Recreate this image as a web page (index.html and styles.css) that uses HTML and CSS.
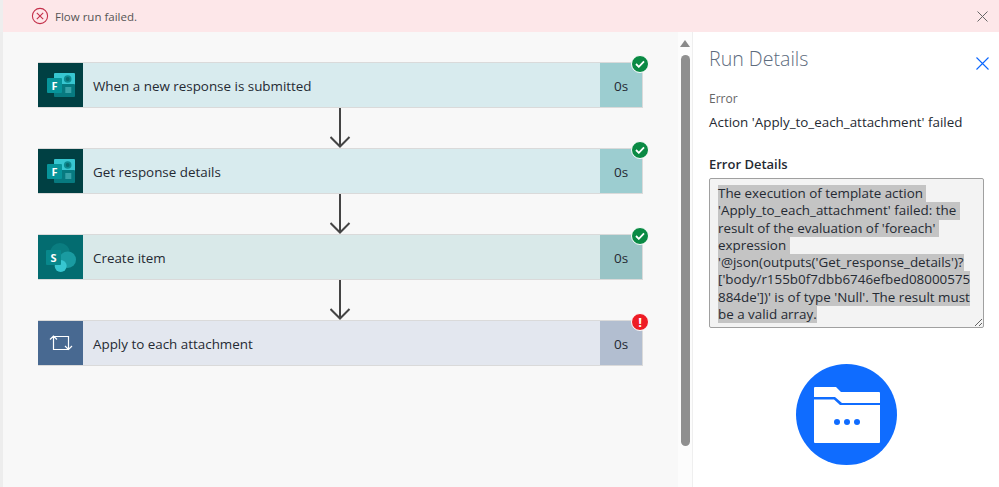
FILE: index.html
```html
<!DOCTYPE html>
<html lang="en">
<head>
    <meta charset="UTF-8">
    <title>Flow run failed</title>
    <link rel="stylesheet" href="styles.css">
</head>
<body>
    <!-- Top banner -->
    <div class="banner">
        <svg class="banner-icon" width="18" height="18" viewBox="0 0 18 18">
            <circle cx="9" cy="9" r="7.600" fill="none" stroke="#c4314b" stroke-width="1.100"/>
            <path d="M5.800 5.800l6.400 6.400M12.200 5.800l-6.400 6.400" stroke="#c4314b" stroke-width="1.100"/>
        </svg>
        <span class="banner-text">Flow run failed.</span>
        <svg class="banner-close" width="11" height="11" viewBox="0 0 11 11">
            <path d="M0.500 0.500l10 10M10.500 0.500l-10 10" stroke="#666" stroke-width="1"/>
        </svg>
    </div>

    <div class="main">
        <!-- Flow canvas -->
        <div class="canvas">
            <div class="step teal">
                <div class="step-icon forms">
                    <svg width="28" height="24" viewBox="0 0 28 24">
                        <rect x="7" y="0" width="21" height="14" rx="1" fill="#37c6d0"/>
                        <rect x="7" y="11" width="21" height="13" rx="1" fill="#077a80"/>
                        <circle cx="20.700" cy="6" r="3.800" fill="#0d8b91"/>
                        <circle cx="20.700" cy="6" r="2" fill="#086a6f"/>
                        <rect x="18.300" y="14" width="6" height="6" fill="#37a3a8"/>
                        <rect x="0" y="5" width="15" height="15" rx="1" fill="#07949a"/>
                        <text x="7.500" y="17" class="tile-letter">F</text>
                    </svg>
                </div>
                <div class="step-name">When a new response is submitted</div>
                <div class="step-time">0s</div>
                <span class="badge ok"><svg width="10" height="8" viewBox="0 0 10 8"><path d="M1 4l2.800 2.800L9 1.300" fill="none" stroke="#fff" stroke-width="1.800"/></svg></span>
            </div>
            <div class="arrow"><svg width="22" height="40" viewBox="0 0 22 40"><path d="M10 0v38.500M0.500 29l9.500 9.500 9.500-9.500" fill="none" stroke="#444" stroke-width="2"/></svg></div>
            <div class="step teal">
                <div class="step-icon forms">
                    <svg width="28" height="24" viewBox="0 0 28 24">
                        <rect x="7" y="0" width="21" height="14" rx="1" fill="#37c6d0"/>
                        <rect x="7" y="11" width="21" height="13" rx="1" fill="#077a80"/>
                        <circle cx="20.700" cy="6" r="3.800" fill="#0d8b91"/>
                        <circle cx="20.700" cy="6" r="2" fill="#086a6f"/>
                        <rect x="18.300" y="14" width="6" height="6" fill="#37a3a8"/>
                        <rect x="0" y="5" width="15" height="15" rx="1" fill="#07949a"/>
                        <text x="7.500" y="17" class="tile-letter">F</text>
                    </svg>
                </div>
                <div class="step-name">Get response details</div>
                <div class="step-time">0s</div>
                <span class="badge ok"><svg width="10" height="8" viewBox="0 0 10 8"><path d="M1 4l2.800 2.800L9 1.300" fill="none" stroke="#fff" stroke-width="1.800"/></svg></span>
            </div>
            <div class="arrow"><svg width="22" height="40" viewBox="0 0 22 40"><path d="M10 0v38.500M0.500 29l9.500 9.500 9.500-9.500" fill="none" stroke="#444" stroke-width="2"/></svg></div>
            <div class="step sea">
                <div class="step-icon sharepoint">
                    <svg width="30" height="30" viewBox="0 0 30 30">
                        <circle cx="14" cy="11" r="10" fill="#0a7d80"/>
                        <circle cx="21.700" cy="17.700" r="8.300" fill="#1a9ba1"/>
                        <circle cx="14.700" cy="24" r="6" fill="#37c6d0"/>
                        <rect x="0" y="8" width="15" height="15" rx="1" fill="#08888c"/>
                        <text x="7.500" y="20" class="tile-letter">S</text>
                    </svg>
                </div>
                <div class="step-name">Create item</div>
                <div class="step-time">0s</div>
                <span class="badge ok"><svg width="10" height="8" viewBox="0 0 10 8"><path d="M1 4l2.800 2.800L9 1.300" fill="none" stroke="#fff" stroke-width="1.800"/></svg></span>
            </div>
            <div class="arrow"><svg width="22" height="40" viewBox="0 0 22 40"><path d="M10 0v38.500M0.500 29l9.500 9.500 9.500-9.500" fill="none" stroke="#444" stroke-width="2"/></svg></div>
            <div class="step slate">
                <div class="step-icon loop">
                    <svg width="24" height="16" viewBox="0 0 24 16">
                        <path d="M1 4.500L4.500 1 8 4.500M4.500 1v13.500H19.500M4.500 1.500H19.500V14.500M16 11l3.500 3.500L23 11" fill="none" stroke="#fff" stroke-width="1.200"/>
                    </svg>
                </div>
                <div class="step-name">Apply to each attachment</div>
                <div class="step-time">0s</div>
                <span class="badge fail">!</span>
            </div>
        </div>

        <!-- Scrollbar of the canvas -->
        <div class="scrollbar">
            <div class="scroll-up"></div>
            <div class="scroll-thumb"></div>
        </div>

        <!-- Run details panel -->
        <div class="panel">
            <div class="panel-head">
                <h2>Run Details</h2>
                <svg class="panel-close" width="13" height="13" viewBox="0 0 13 13"><path d="M0.500 0.500l12 12M12.500 0.500l-12 12" fill="none" stroke="#0a66ff" stroke-width="1.100"/></svg>
            </div>
            <div class="panel-label">Error</div>
            <div class="panel-value">Action 'Apply_to_each_attachment' failed</div>
            <div class="panel-title">Error Details</div>
            <div class="error-box">
                <span class="sel">The execution of template action&nbsp;</span>
                <span class="sel">'Apply_to_each_attachment' failed: the&nbsp;</span>
                <span class="sel">result of the evaluation of 'foreach'&nbsp;</span>
                <span class="sel">expression&nbsp;</span>
                <span class="sel">'@json(outputs('Get_response_details')?</span>
                <span class="sel">['body/r155b0f7dbb6746efbed08000575</span>
                <span class="sel">884de'])' is of type 'Null'. The result must</span>
                <span class="sel">be a valid array.</span>
            </div>
            <div class="folder">
                <svg width="66" height="56" viewBox="0 0 66 56">
                    <path d="M1 0H22L27 5H65A1 1 0 0 1 66 6V16H28L21 10H0V1A1 1 0 0 1 1 0z" fill="#fff"/>
                    <path d="M0 12.500H20L26 18H66V55A1 1 0 0 1 65 56H1A1 1 0 0 1 0 55z" fill="#fff"/>
                    <circle cx="23" cy="35" r="3" fill="#0f6cff"/>
                    <circle cx="33" cy="35" r="3" fill="#0f6cff"/>
                    <circle cx="43" cy="35" r="3" fill="#0f6cff"/>
                </svg>
            </div>
        </div>
    </div>
</body>
</html>
```

FILE: styles.css
```css
body, html {
    margin: 0;
    padding: 0;
    height: 100%;
    overflow: hidden;
    font-family: "Open Sans", "Noto Sans", sans-serif;
    font-size: 14px;
    color: #252a33;
    background: #fff;
}
/* Banner */
.banner {
    height: 32px;
    padding: 0 11px 0 28px;
    display: flex;
    align-items: center;
    border-left: 3px solid #eee;
    background-color: #fde7e9;
}
.banner-text {
    margin-left: 6px;
    font-size: 11.500px;
    color: #555;
    flex: 1;
}
/* Main row */
.main {
    display: flex;
    height: 455px;
    border-left: 3px solid #ededed;
}
.canvas {
    width: 675px;
    padding: 30px 0 0 35px;
    box-sizing: border-box;
    background-color: #f8f8f8;
}
.step {
    position: relative;
    display: flex;
    width: 605px;
    height: 46px;
    box-sizing: border-box;
    border: 1px solid #dadada;
    border-left: none;
}
.step-icon {
    width: 45px;
    display: flex;
    align-items: center;
    justify-content: center;
}
.step-name {
    flex: 1;
    display: flex;
    align-items: center;
    padding: 1px 0 0 10px;
    font-size: 13.400px;
}
.step-time {
    width: 42px;
    display: flex;
    align-items: center;
    justify-content: center;
    padding-top: 1px;
    font-size: 13.500px;
}
.tile-letter {
    font-family: "Open Sans", sans-serif;
    font-size: 11px;
    font-weight: 700;
    fill: #fff;
    text-anchor: middle;
}
.teal { background-color: #d8ebee; }
.teal .step-time { background-color: #9ccdd0; }
.forms { background-color: #004043; }
.sea { background-color: #d9e9e9; }
.sea .step-time { background-color: #99c4c6; }
.sharepoint { background-color: #036c70; }
.slate { background-color: #e3e7ef; }
.slate .step-time { background-color: #b2bed0; }
.loop { background-color: #486991; }
.badge {
    position: absolute;
    top: -8px;
    right: -7px;
    width: 16px;
    height: 16px;
    border: 1px solid #fff;
    border-radius: 50%;
    display: flex;
    align-items: center;
    justify-content: center;
}
.ok { background-color: #0a8a44; }
.fail {
    background-color: #ee1c25;
    color: #fff;
    font-weight: 700;
    font-size: 13px;
}
.arrow {
    width: 605px;
    height: 40px;
    display: flex;
    justify-content: center;
}
/* Scrollbar */
.scrollbar {
    width: 14px;
    padding-top: 8px;
    box-sizing: border-box;
    background-color: #fcfcfc;
    display: flex;
    flex-direction: column;
    align-items: center;
}
.scroll-up {
    width: 0;
    height: 0;
    border-left: 5px solid transparent;
    border-right: 5px solid transparent;
    border-bottom: 7px solid #8a8a8a;
}
.scroll-thumb {
    width: 9px;
    height: 391px;
    margin-top: 8px;
    border-radius: 5px;
    background-color: #8f8f8f;
}
/* Panel */
.panel {
    flex: 1;
    padding: 0 10px 0 16px;
    border-left: 1px solid #efefef;
    background-color: #fff;
}
.panel-head {
    display: flex;
    justify-content: space-between;
    align-items: flex-end;
    height: 40px;
}
.panel-close {
    margin-bottom: 2px;
}
.panel-head h2 {
    margin: 0;
    font-size: 19.600px;
    font-weight: 300;
    color: #5d6b7d;
}
.panel-label {
    margin-top: 18px;
    font-size: 12px;
    color: #666;
}
.panel-value {
    margin-top: 6px;
    font-size: 13.400px;
}
.panel-title {
    margin-top: 24px;
    font-size: 13px;
    font-weight: 600;
}
.error-box {
    width: 275px;
    height: 150px;
    margin-top: 5px;
    padding: 6px 8px 0;
    box-sizing: border-box;
    border: 1px solid #a0a0a0;
    border-radius: 2px;
    background-color: #f3f3f3;
    resize: both;
    overflow: hidden;
    font-size: 13.400px;
    line-height: 17.300px;
    white-space: nowrap;
}
.sel {
    display: block;
    width: fit-content;
    background-color: #c4c4c4;
}
.folder {
    width: 101px;
    height: 101px;
    margin: 36px 0 0 87px;
    border-radius: 50%;
    background-color: #0f6cff;
    display: flex;
    align-items: center;
    justify-content: center;
}
```
